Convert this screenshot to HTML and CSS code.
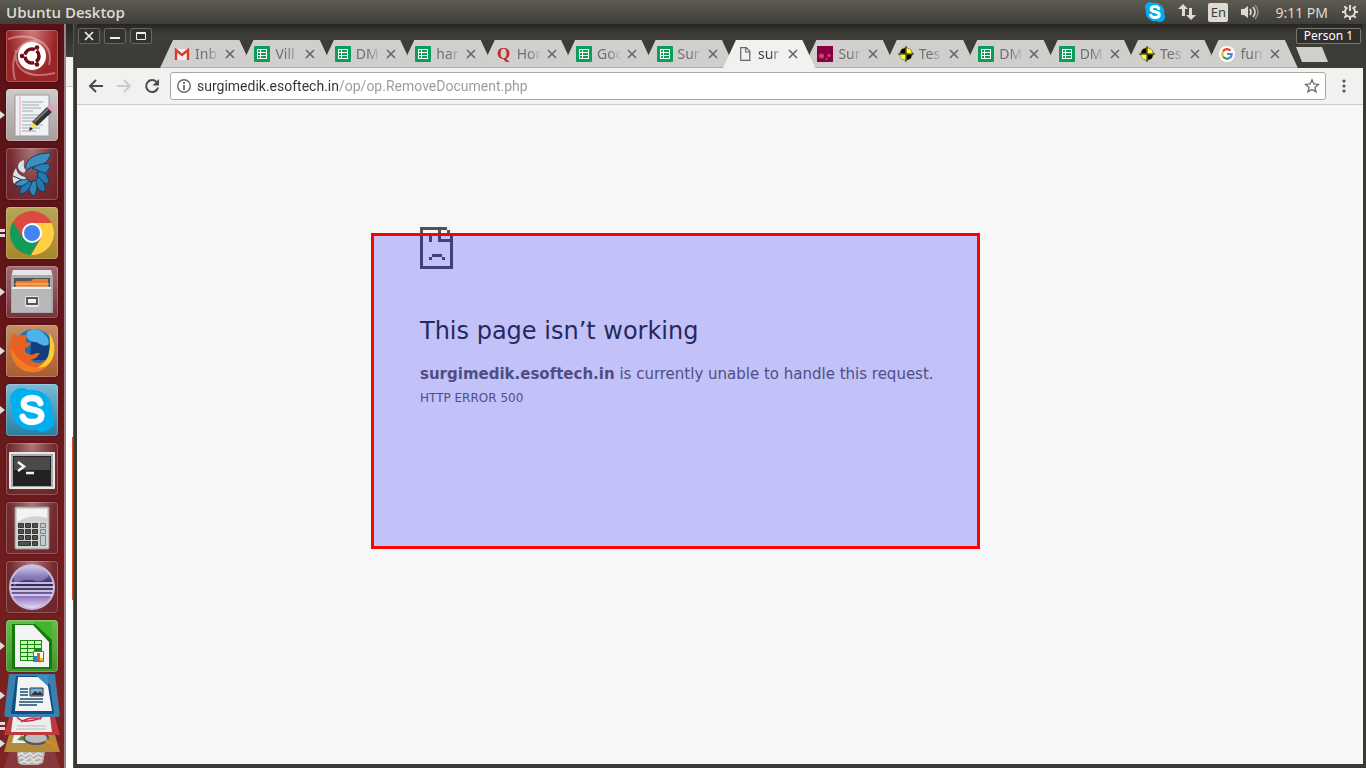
FILE: index.html
```html
<!DOCTYPE html>
<html lang="en">
<head>
<meta charset="utf-8">
<title>Ubuntu Desktop</title>
<link rel="stylesheet" href="styles.css">
</head>
<body>
<svg class="defs" aria-hidden="true">
  <symbol id="sheet" viewBox="0 0 16 16"><rect width="16" height="16" rx="1" fill="#0c9d58"/><path fill="#fff" d="M3 3h10v10H3z"/><path fill="#0c9d58" d="M4 4h2v2H4zm3 0h5v2H7zM4 7h2v2H4zm3 0h5v2H7zM4 10h2v2H4zm3 0h5v2H7z"/></symbol>
  <symbol id="target" viewBox="0 0 16 16"><circle cx="8" cy="8" r="6.500" fill="#000"/><path fill="#ff3" d="M8 8V1.500A6.500 6.500 0 0 1 14.500 8zM8 8v6.500A6.500 6.500 0 0 1 1.500 8z" transform="rotate(-90 8 8)"/><path d="M8 0v16M0 8h16" stroke="#222"/><path fill="#ff3" d="M8.500 2a6 6 0 0 1 5.500 5.500H8.500zM7.500 14A6 6 0 0 1 2 8.500h5.500z"/><path fill="#000" d="M7.500 2A6 6 0 0 0 2 7.500h5.500zM8.500 14A6 6 0 0 0 14 8.500H8.500z"/></symbol>
  <symbol id="close" viewBox="0 0 10 10"><path d="M1 1l8 8M9 1L1 9" stroke="#666" stroke-width="1.600"/></symbol>
  <symbol id="skype" viewBox="0 0 46 46"><g fill="#00aff0"><circle cx="23" cy="23" r="19.500"/><circle cx="13" cy="13" r="11"/><circle cx="33" cy="33" r="11"/></g><path d="M31 16.500C30 12.500 27 11.500 23 11.500C18 11.500 15 13.500 15 17C15 25 32 20 32 28.500C32 32.500 28 34.500 23 34.500C18 34.500 15 32.500 14 29.500" fill="none" stroke="#fff" stroke-width="6" stroke-linecap="round"/></symbol>
</svg>

<header class="panel">
  <span class="panel-title">Ubuntu Desktop</span>
  <nav class="indicators" aria-label="Indicators">
    <button class="ind" aria-label="Skype"><svg width="22" height="22"><use href="#skype"/></svg></button>
    <button class="ind" aria-label="Network"><svg width="18" height="16" viewBox="0 0 18 16"><path fill="#dfdbd2" d="M5 0l5 5H7v7H4V5H0zM13 16l-5-5h3V4h3v7h4z"/></svg></button>
    <button class="lang">En</button>
    <button class="ind" aria-label="Volume"><svg width="20" height="16" viewBox="0 0 20 16"><path fill="#dfdbd2" d="M1 5h3l4-3v12l-4-3H1z"/><path d="M10 5q2 3 0 6M13 3q4 5 0 10" stroke="#dfdbd2" stroke-width="1.600" fill="none"/><path d="M15 1q6 7 0 14" stroke="#8b8980" stroke-width="1.600" fill="none"/></svg></button>
    <button class="clock">9:11 PM</button>
    <button class="ind" aria-label="System"><svg width="18" height="18" viewBox="0 0 18 18" fill="none" stroke="#dfdbd2"><path d="M6.500 4.500a5 5 0 1 0 5 0" stroke-width="2"/><path d="M9 2v6" stroke-width="2"/><path d="M1 9h3M14 9h3M9 14v3M3.300 3.300l2 2M14.700 3.300l-2 2M3.300 14.700l2-2M14.700 14.700l-2-2" stroke-width="2"/></svg></button>
  </nav>
</header>

<div class="desktop">
  <nav class="launcher" aria-label="Launcher">
    <button class="tile dash" aria-label="Search"><svg viewBox="0 0 52 52"><g fill="none" stroke="#fff" stroke-opacity=".35" stroke-width="2"><path d="M2 9C24 2 49 12 43 35M9 50C2 22 18 5 37 13M49 43C25 49 7 42 10 20"/></g><circle cx="26" cy="26" r="14" fill="#fff"/><circle cx="26" cy="26" r="7" fill="none" stroke="#6b1014" stroke-width="3.500" stroke-dasharray="12.600 2" stroke-dashoffset="6"/><g fill="#6b1014"><circle cx="16" cy="26" r="2.300"/><circle cx="31" cy="17.500" r="2.300"/><circle cx="31" cy="34.500" r="2.300"/></g></svg></button>
    <button class="tile gedit run" aria-label="Text Editor"><svg viewBox="0 0 52 52"><path d="M9 6h34v41H9z" fill="#eef1f6" stroke="#999"/><path d="M14 6v41" stroke="#eba9a9"/><path d="M16 13h21M16 16h17M16 19h19M16 22h11M16 26h21M16 29h19M16 32h12M16 36h21M16 39h18M16 42h14" stroke="#a4a8ae"/><path d="M26 33L41 18l5 5-15 14z" fill="#333"/><path d="M28 33l14-13" stroke="#777" stroke-width="2"/><path d="M41 18l2-2q5 0 5 4l-2 3z" fill="#e896c2"/><path d="M26 33l-2 8 7-4z" fill="#f4dc5b"/><path d="M23 42l1-4 3 2z" fill="#222"/></svg></button>
    <button class="tile" aria-label="Shutter"><svg viewBox="0 0 52 52" stroke="#123c5c" stroke-width="1"><path fill="#3d8fc0" d="M19 23C19 10 30 5 45 5C43 13 38 17 32 18C27 18 23 20 19 23z"/><path fill="#2b7fb2" d="M26 21C31 16 38 15 44 16C44 22 40 26 36 26C33 22 30 21 26 21z"/><path fill="#2378ad" d="M31 24C37 23 42 25 43 35C38 36 34 34 32 30z"/><path fill="#2378ad" d="M32 29C36 32 40 36 39 44C33 43 30 39 29 33z"/><path fill="#2b86bb" d="M30 32C31 38 32 43 28 48C23 46 22 40 25 34z"/><path fill="#2378ad" d="M26 34C24 40 21 45 14 46C13 40 17 35 22 33z"/><path fill="#3d8fc0" d="M23 33C19 37 15 40 9 37C11 33 16 31 21 31z"/><path fill="#d2e3ec" stroke="none" d="M18 25C10 23 10 14 18 12C18 16 17 20 20 22zM19 29C14 28 11 25 10 20C6 26 6 31 8 36C11 32 15 31 20 31z"/><path d="M7 28L16 32" stroke="#5a1e25" fill="none"/></svg></button>
    <button class="tile chrome multi" aria-label="Google Chrome"><svg viewBox="0 0 52 52"><circle cx="26" cy="26" r="22" fill="#dc4b40"/><path fill="#119d58" d="M7 15a22 22 0 0 0 18 33l9-17H17z"/><path fill="#ffce42" d="M45.600 16H26l9 15-10 17A22 22 0 0 0 45.600 16z"/><circle cx="26" cy="26" r="10" fill="#fff"/><circle cx="26" cy="26" r="8" fill="#4385f5"/></svg></button>
    <button class="tile files run" aria-label="Files"><svg viewBox="0 0 52 52"><path d="M7 4h38l2 6v37H5V10z" fill="#aaa"/><path d="M7 4h38l1 5H6z" fill="#e6e6e6"/><path d="M8 12h36v11H8z" fill="#555"/><path d="M10 15h15l2-2h15v9H10z" fill="#e67b35"/><path d="M9 18h34M9 21h34" stroke="#f7c98e"/><path d="M6 22h39v24H6z" fill="#b8b8b8"/><path d="M6 22h39" stroke="#eee" stroke-width="2"/><rect x="20" y="31" width="12" height="9" rx="1" fill="none" stroke="#e8e8e8" stroke-width="2"/><rect x="21" y="32" width="10" height="6" fill="#eee" stroke="#555" stroke-width="2"/></svg></button>
    <button class="tile firefox run" aria-label="Firefox"><svg viewBox="0 0 52 52"><circle cx="28" cy="23" r="19" fill="#1d6db4"/><path d="M27 4c-8 1-9 9-2 12 5 4 0 9 5 12 8 3 15-4 12-14C39 8 34 4 27 4z" fill="#4db2e6"/><path d="M25 17c8-2 10 7 19 2l-3 16H24z" fill="#143d80"/><path fill="#e66122" d="M8 8l3 4q5-3 11-2-3 4-2 7l5 1q0 3-6 5-1 4 3 6 4 2 8-1h4q-4 7-10 7 10 7 18-3 5-8 2-17 8 16-2 26Q27 53 11 39C1 28 3 18 8 8z"/><path d="M43 8q9 12 3 27-9 13-23 11 18-6 20-18 2-10 0-20z" fill="#ffcb2d"/><path d="M5 23q0 17 14 23 14 4 22-5Q20 48 5 23z" fill="#f37b24"/></svg></button>
    <button class="tile skype run" aria-label="Skype"><svg viewBox="0 0 52 52"><use href="#skype" x="2" y="2" width="48" height="48"/></svg></button>
    <button class="tile" aria-label="Terminal"><svg viewBox="0 0 52 52"><rect x="3" y="9" width="46" height="37" rx="1" fill="#e8e8e8"/><path d="M5 11h42v33H5z" fill="#aaa"/><path d="M7 13h38v30H7z" fill="#222"/><path d="M8 14h36v13H8z" fill="#4a4a4a"/><path d="M12 19l6 4.500-6 4.500M20 30h8" fill="none" stroke="#f4f4f4" stroke-width="2.500"/></svg></button>
    <button class="tile" aria-label="Calculator"><svg viewBox="0 0 52 52"><rect x="9" y="5" width="34" height="42" rx="1" fill="#d2d2d0" stroke="#9b9393"/><path d="M11 7h30v9q-15-5-30 4z" fill="#f3f3f1"/><g fill="#4f5350" stroke="#333"><path d="M12.500 21.500h5v4h-5zm7 0h5v4h-5zm7 0h5v4h-5zM12.500 27.500h5v4h-5zm7 0h5v4h-5zm7 0h5v4h-5zM12.500 33.500h5v4h-5zm7 0h5v4h-5zm7 0h5v4h-5zM12.500 39.500h12v4h-12zm14 0h5v4h-5z"/></g><path d="M34.500 21.500h5v4h-5zm0 6h5v4h-5zm0 6h5v10h-5z" fill="#bdcbd2" stroke="#78868b"/></svg></button>
    <button class="tile" aria-label="Eclipse"><svg viewBox="0 0 52 52"><defs><linearGradient id="orb" x2="0" y2="1"><stop stop-color="#d8d2ee"/><stop offset=".25" stop-color="#6854a1"/><stop offset=".48" stop-color="#2d205a"/><stop offset=".75" stop-color="#9c83c8"/><stop offset="1" stop-color="#e8e0f2"/></linearGradient></defs><circle cx="26" cy="26" r="22" fill="url(#orb)" stroke="#c6bada" stroke-width="2"/><path d="M8 12q18-15 36 0-5 10-14 8-16-4-22 6z" fill="#d9d0f0" opacity=".35"/><path d="M5 22h42M5 26h43M5 30h42M6 34h40" stroke="#eee8f8" stroke-width="1.500"/></svg></button>
    <button class="tile calc run" aria-label="LibreOffice Calc"><svg viewBox="0 0 52 52"><path d="M6 4h27l13 15v30H6z" fill="#137b0b"/><path d="M9 5h18l16 17v25H9z" fill="#f4f4f4"/><path d="M27 2h19v18z" fill="#43b52d"/><path d="M14 20h22v21H14z" fill="#17890f"/><path fill="#caf6bd" d="M15 21h6v3h-6zm7 0h6v3h-6zm7 0h6v3h-6zM15 25h6v3h-6zm7 0h6v3h-6zm7 0h6v3h-6zM15 29h6v3h-6zm7 0h6v3h-6zM15 33h6v3h-6zm7 0h5v3h-5zM15 37h6v3h-6zm7 0h5v3h-5z"/><path d="M27.500 31.500h10v10h-10z" fill="#fff" stroke="#667"/><path d="M28 36h3v5h-3z" fill="#2687ce"/><path d="M31 33h3v8h-3z" fill="#e95c20"/><path d="M34 38h3v3h-3z" fill="#f4b31c"/></svg></button>
    <div class="stack">
      <div class="slot run"><button class="fold writer" aria-label="LibreOffice Writer"><svg viewBox="0 0 56 43"><path d="M12 2h24l10 9 4 29H7z" fill="#0c4f80"/><path d="M14 3h20l10 9 4 25H11z" fill="#f4f4f4"/><path d="M32 1h12v11z" fill="#3d8fbe"/><path d="M16 15h8M16 18h8M16 21h8M16 25h23M15 28h24M15 31h18" stroke="#174f77" stroke-width="1.600"/><path d="M26 14h13v8H26z" fill="#69b5e2" stroke="#333"/><path d="M27 21l4-4 3 2 2-2 3 4z" fill="#333"/></svg></button></div>
      <div class="slot multi"><button class="fold pdf" aria-label="Document Viewer"><svg viewBox="0 0 56 19"><path d="M9 0h37l2 15H7z" fill="#ededed"/><path d="M13 0q4 5 11 4 9-1 14-4M17 5q9-6 20-3" fill="none" stroke="#dd2734" stroke-width="1.500"/><path d="M13 9h29M12 12h30" stroke="#bbb"/></svg></button></div>
      <div class="slot run"><button class="fold search" aria-label="Image Viewer"><svg viewBox="0 0 56 17"><path d="M10 0h30l2 8H8z" fill="#eee"/><path d="M13 5l5-5 5 6z" fill="#608c38"/><ellipse cx="32" cy="3" rx="12" ry="6" fill="#bbb" stroke="#555" stroke-width="2"/><path d="M43 6l8 5" stroke="#d8861e" stroke-width="4" stroke-linecap="round"/></svg></button></div>
      <div class="slot"><button class="fold trash" aria-label="Trash"><svg viewBox="0 0 56 16"><path d="M13 0h28l-2 11-5 2H18l-4-2z" fill="#b6b2b0"/><path d="M14 3l4-2 3 3 5-3 3 3 5-3 5 2M15 7l3-2 4 3 4-3 4 3 4-3 4 2M16 11l4-2 4 2 4-2 4 2 5-2" fill="none" stroke="#e6e4e2" stroke-width="1.500"/></svg></button></div>
    </div>
  </nav>

  <div class="behind"><div class="behind-frame"></div><div class="behind-bar"></div><div class="behind-page"></div></div>

  <main class="window">
    <div class="titlebar">
      <div class="controls">
        <button aria-label="Close"><svg viewBox="0 0 20 14"><path d="M6 3l8 8M14 3l-8 8" stroke="#eee" stroke-width="1.700"/></svg></button>
        <button aria-label="Minimize"><svg viewBox="0 0 20 14"><path d="M5 9h10" stroke="#eee" stroke-width="2"/></svg></button>
        <button aria-label="Maximize"><svg viewBox="0 0 20 14"><path d="M5.500 3.500h9v7h-9zM5 4.500h10" stroke="#eee" fill="none"/></svg></button>
      </div>
      <div class="tabs">
        <div class="tab"><svg class="fav" viewBox="0 0 16 16"><path d="M1 3h14v11H1z" fill="#eee"/><path d="M2 14V4l6 5 6-5v10" fill="none" stroke="#d93a32" stroke-width="2.400"/></svg><a href="#">Inb</a><button aria-label="Close tab"><svg><use href="#close"/></svg></button></div>
        <div class="tab"><svg class="fav"><use href="#sheet"/></svg><a href="#">Vill</a><button aria-label="Close tab"><svg><use href="#close"/></svg></button></div>
        <div class="tab"><svg class="fav"><use href="#sheet"/></svg><a href="#">DM</a><button aria-label="Close tab"><svg><use href="#close"/></svg></button></div>
        <div class="tab"><svg class="fav"><use href="#sheet"/></svg><a href="#">har</a><button aria-label="Close tab"><svg><use href="#close"/></svg></button></div>
        <div class="tab"><span class="fav quora">Q</span><a href="#">Hor</a><button aria-label="Close tab"><svg><use href="#close"/></svg></button></div>
        <div class="tab"><svg class="fav"><use href="#sheet"/></svg><a href="#">Goo</a><button aria-label="Close tab"><svg><use href="#close"/></svg></button></div>
        <div class="tab before-active"><svg class="fav"><use href="#sheet"/></svg><a href="#">Sur</a><button aria-label="Close tab"><svg><use href="#close"/></svg></button></div>
        <div class="tab active"><svg class="fav" viewBox="0 0 16 16"><path d="M3.700 1.700h5.600l3.500 3.500v9.100H3.700zM8.700 2v4h4" fill="none" stroke="#666" stroke-width="1.200"/></svg><a href="#">sur</a><button aria-label="Close tab"><svg><use href="#close"/></svg></button></div>
        <div class="tab"><svg class="fav" viewBox="0 0 16 16"><path d="M0 0h16v16H0z" fill="#870040"/><g fill="#d43b7c"><circle cx="4.500" cy="10" r="2.500"/><circle cx="12" cy="9.500" r="1.700"/><circle cx="9.500" cy="13" r="1"/></g></svg><a href="#">Sur</a><button aria-label="Close tab"><svg><use href="#close"/></svg></button></div>
        <div class="tab"><svg class="fav"><use href="#target"/></svg><a href="#">Tes</a><button aria-label="Close tab"><svg><use href="#close"/></svg></button></div>
        <div class="tab"><svg class="fav"><use href="#sheet"/></svg><a href="#">DM</a><button aria-label="Close tab"><svg><use href="#close"/></svg></button></div>
        <div class="tab"><svg class="fav"><use href="#sheet"/></svg><a href="#">DM</a><button aria-label="Close tab"><svg><use href="#close"/></svg></button></div>
        <div class="tab"><svg class="fav"><use href="#target"/></svg><a href="#">Tes</a><button aria-label="Close tab"><svg><use href="#close"/></svg></button></div>
        <div class="tab"><svg class="fav" viewBox="0 0 16 16"><circle cx="8" cy="8" r="8" fill="#fff"/><g fill="none" stroke-width="2.200"><path d="M4 5.500A4.700 4.700 0 0 1 11.500 4.700" stroke="#ea4335"/><path d="M4 5.500a4.700 4.700 0 0 0 0 5" stroke="#fbbc05"/><path d="M4 10.500a4.700 4.700 0 0 0 7 1.200" stroke="#34a853"/><path d="M11 11.700A4.500 4.500 0 0 0 12.700 8H8" stroke="#4285f4"/></g></svg><a href="#">fun</a><button aria-label="Close tab"><svg><use href="#close"/></svg></button></div>
      </div>
      <div class="frame-end">
        <button class="person">Person 1</button>
        <button class="new-tab" aria-label="New tab"></button>
      </div>
    </div>

    <form class="toolbar">
      <button type="button" aria-label="Back"><svg viewBox="0 0 16 16"><path d="M15 8H2M8 2L2 8l6 6" fill="none" stroke="#4b4b4b" stroke-width="2"/></svg></button>
      <button type="button" aria-label="Forward"><svg viewBox="0 0 16 16"><path d="M1 8h13M8 2l6 6-6 6" fill="none" stroke="#cdcccb" stroke-width="2"/></svg></button>
      <button type="button" aria-label="Reload"><svg viewBox="0 0 16 16"><path d="M13 4.500A6 6 0 1 0 14 9.500" fill="none" stroke="#4b4b4b" stroke-width="2"/><path d="M15 1v6.500H8.500z" fill="#4b4b4b"/></svg></button>
      <div class="omnibox">
        <svg viewBox="0 0 16 16" aria-hidden="true"><circle cx="8" cy="8" r="6.300" fill="none" stroke="#666" stroke-width="1.400"/><path d="M8 7v5M8 4v2" stroke="#666" stroke-width="1.800"/></svg>
        <input type="text" aria-label="Address" value="surgimedik.esoftech.in/op/op.RemoveDocument.php">
        <button type="button" aria-label="Bookmark"><svg viewBox="0 0 16 16"><path d="M8 1.800l1.800 4.200 4.600.4-3.500 3 1.100 4.500L8 11.500l-4 2.400 1.100-4.500-3.500-3L6.200 6z" fill="none" stroke="#6a6a6a" stroke-width="1.300"/></svg></button>
      </div>
      <button type="button" aria-label="Menu"><svg viewBox="0 0 16 16" fill="#555"><circle cx="8" cy="3" r="1.600"/><circle cx="8" cy="8" r="1.600"/><circle cx="8" cy="13" r="1.600"/></svg></button>
    </form>

    <section class="page">
      <div class="error">
        <svg class="sad" viewBox="0 0 33 42" shape-rendering="crispEdges" aria-hidden="true"><path fill="#535353" d="M0 0h27v3h3v3h3v36H0zM3 3v36h27V15H18V3zM21 3v9h9V6h-3V3zM9 9h3v6H9zM12 27h10v3H12zM9 30h3v3H9zM22 30h3v3h-3z" fill-rule="evenodd"/></svg>
        <h1>This page isn’t working</h1>
        <p><strong>surgimedik.esoftech.in</strong> is currently unable to handle this request.</p>
        <p class="code">HTTP ERROR 500</p>
        <div class="highlight"></div>
      </div>
    </section>
  </main>
</div>
</body>
</html>
```

FILE: styles.css
```css
* { box-sizing: border-box; }
body {
  margin: 0;
  height: 100vh;
  display: flex;
  flex-direction: column;
  overflow: hidden;
  font-family: "Noto Sans", "Open Sans", sans-serif;
  background: #fff;
}
button { padding: 0; border: 0; background: none; font: inherit; color: inherit; }
svg { display: block; flex: none; }
.defs { position: absolute; width: 0; height: 0; }

/* top panel */
.panel {
  flex: none;
  height: 24px;
  padding: 0 7px 0 6px;
  display: flex;
  align-items: center;
  justify-content: space-between;
  background: linear-gradient(#5d5b51, #3f3e39);
  color: #dfdbd2;
  font-size: 14px;
}
.panel-title { font: 600 15px/20px "Open Sans", sans-serif; }
.indicators { display: flex; align-items: center; gap: 12px; }
.ind { display: block; }
.lang {
  width: 20px;
  height: 19px;
  border-radius: 2px;
  background: #dfdbd2;
  color: #3c3b37;
  font-size: 13px;
  line-height: 19px;
}
.clock { padding: 0 1px 0 3px; }

/* launcher */
.desktop { flex: 1; min-height: 0; display: flex; }
.launcher {
  flex: none;
  width: 66px;
  padding: 6px 0 0;
  display: flex;
  flex-direction: column;
  align-items: center;
  gap: 7px;
  background: linear-gradient(#5a1116, #67181b 50%, #7f2323);
  border-right: 2px solid #a58084;
}
.tile {
  position: relative;
  flex: none;
  width: 52px;
  height: 52px;
  border-radius: 4px;
  background: radial-gradient(ellipse at 50% 0, #ad7779, #752c31 60%, #6c2429);
  box-shadow: inset 0 0 0 1px rgba(255, 255, 255, .22), 0 0 3px rgba(0, 0, 0, .3);
}
.tile svg { width: 100%; height: 100%; }
.dash { background: radial-gradient(ellipse at 50% 0, #d07b7b, #9a2426 65%); }
.gedit { background: linear-gradient(#cfc9c9, #a79d9d); }
.chrome { background: linear-gradient(#b7a559, #a8872a); }
.files { background: linear-gradient(#a46c74, #77303a); }
.firefox { background: linear-gradient(#c38e63, #aa5c32); }
.skype { background: linear-gradient(#78bcd5, #2a7d9f); }
.calc { background: linear-gradient(#65bf48, #41932c); }
.run::before, .multi::before {
  content: "";
  position: absolute;
  left: -6px;
  top: calc(50% - 4px);
  width: 5px;
  height: 8px;
  background: #ddd;
  clip-path: polygon(0 0, 100% 50%, 0 100%);
}
.multi::before { clip-path: none; background: linear-gradient(#ddd 3px, transparent 3px 5px, #ddd 5px); }
.stack { margin-top: -5px; width: 64px; }
.slot { position: relative; display: flex; justify-content: center; }
.slot::before { left: 0; }
.fold { width: 56px; clip-path: polygon(5px 0, calc(100% - 5px) 0, 100% 100%, 0 100%); }
.writer { height: 43px; background: #3b7fae; border-radius: 3px; }
.pdf { height: 18px; background: #bd3a3c; }
.search { height: 17px; background: #b18b39; }
.trash { height: 16px; background: #86393b; }

/* sliver of the window underneath */
.behind { flex: none; width: 8px; display: flex; flex-direction: column; background: #fff; }
.behind-frame { height: 33px; background: linear-gradient(#282724, #42413b); }
.behind-bar { height: 30px; background: #f2f1ef; border-bottom: 1px solid #ccc; }
.behind-page { flex: 1; background: linear-gradient(#d9501c, #d9501c) 6px 350px / 2px 163px no-repeat; }

/* browser window */
.window {
  flex: 1;
  min-width: 0;
  padding: 0 3px 4px;
  display: flex;
  flex-direction: column;
  background: #3a3935;
  box-shadow: -1px 0 0 #55544f;
}
.titlebar {
  height: 44px;
  flex: none;
  display: flex;
  align-items: flex-end;
  background: linear-gradient(#252421, #3d3c37 10px);
}
.controls { width: 83px; align-self: flex-start; padding: 4px 0 0 1px; display: flex; gap: 4px; }
.controls button { width: 22px; height: 16px; border: 1px solid #66655f; border-radius: 2px; background: #34332f; }
.controls svg { width: 20px; height: 14px; }
.tabs { flex: 1; min-width: 0; display: flex; }
.tab {
  position: relative;
  z-index: 0;
  flex: 1;
  min-width: 0;
  height: 28px;
  padding-left: 14px;
  display: flex;
  align-items: center;
  color: #707070;
}
.tab::before {
  content: "";
  position: absolute;
  z-index: -1;
  inset: 0 -12px 0 0;
  background: linear-gradient(#d0cfcd 27px, #aeadab 27px);
  clip-path: polygon(0 100%, 13px 0, calc(100% - 13px) 0, 100% 100%);
}
.tab::after {
  content: "";
  position: absolute;
  z-index: 1;
  right: -9px;
  bottom: 0;
  width: 1px;
  height: 13px;
  background: #aeadab;
  transform: skewX(25deg);
}
.tab.active { z-index: 2; color: #3c3c3c; }
.tab.active::before { background: #f2f1ef; }
.tab.active::after, .tab.before-active::after, .tab:last-child::after { display: none; }
.fav { width: 16px; height: 16px; flex: none; }
.quora { font: 700 17px/15px "Liberation Serif", serif; color: #b92b27; text-align: center; }
.tab a {
  flex: none;
  width: 30px;
  margin-left: 5px;
  white-space: nowrap;
  color: inherit;
  text-decoration: none;
  font-size: 14px;
  line-height: 20px;
  mask-image: linear-gradient(90deg, #000 12px, transparent 25px);
}
.tab button svg { width: 10px; height: 10px; }
.frame-end {
  width: 77px;
  align-self: stretch;
  padding: 4px 2px 0 10px;
  display: flex;
  flex-direction: column;
  gap: 3px;
}
.person { height: 16px; border: 1px solid #77766f; border-radius: 2px; background: #302f2c; color: #fff; font-size: 12px; line-height: 14px; }
.new-tab { width: 32px; height: 15px; background: #d0cfcd; clip-path: polygon(0 0, 26px 0, 100% 100%, 6px 100%); }

.toolbar {
  flex: none;
  height: 37px;
  padding: 0 11px;
  display: flex;
  align-items: center;
  gap: 12px;
  background: #f2f1ef;
  border-bottom: 1px solid #ccc;
}
.toolbar svg { width: 16px; height: 16px; }
.omnibox {
  flex: 1;
  height: 28px;
  margin: 0 -2px;
  padding: 0 5px;
  display: flex;
  align-items: center;
  gap: 5px;
  background: #fff;
  border: 1px solid #a9a8a6;
  border-radius: 3px;
}
.omnibox input {
  flex: 1;
  min-width: 0;
  padding: 0;
  border: 0;
  outline: 0;
  font: 14px/20px Roboto, sans-serif;
  color: transparent;
  background: linear-gradient(90deg, #333 141px, #999 141px);
  background-clip: text;
}

/* error page */
.page { flex: 1; min-height: 0; padding: 122px 24px 0; background: #f7f7f7; }
.error {
  position: relative;
  max-width: 600px;
  margin: 0 auto;
  font-family: "DejaVu Sans", sans-serif;
  color: #646464;
}
.sad { width: 33px; height: 42px; }
.error h1 { margin: 47px 0 16px; font-size: 24px; line-height: 30px; font-weight: 400; color: #333; }
.error p { margin: 0; font-size: 15px; line-height: 24px; }
.error .code { font-size: 12px; }
.highlight {
  position: absolute;
  left: -49px;
  top: 6px;
  width: 609px;
  height: 316px;
  border: 3px solid #f00;
  background: rgba(0, 0, 255, .21);
}
```
